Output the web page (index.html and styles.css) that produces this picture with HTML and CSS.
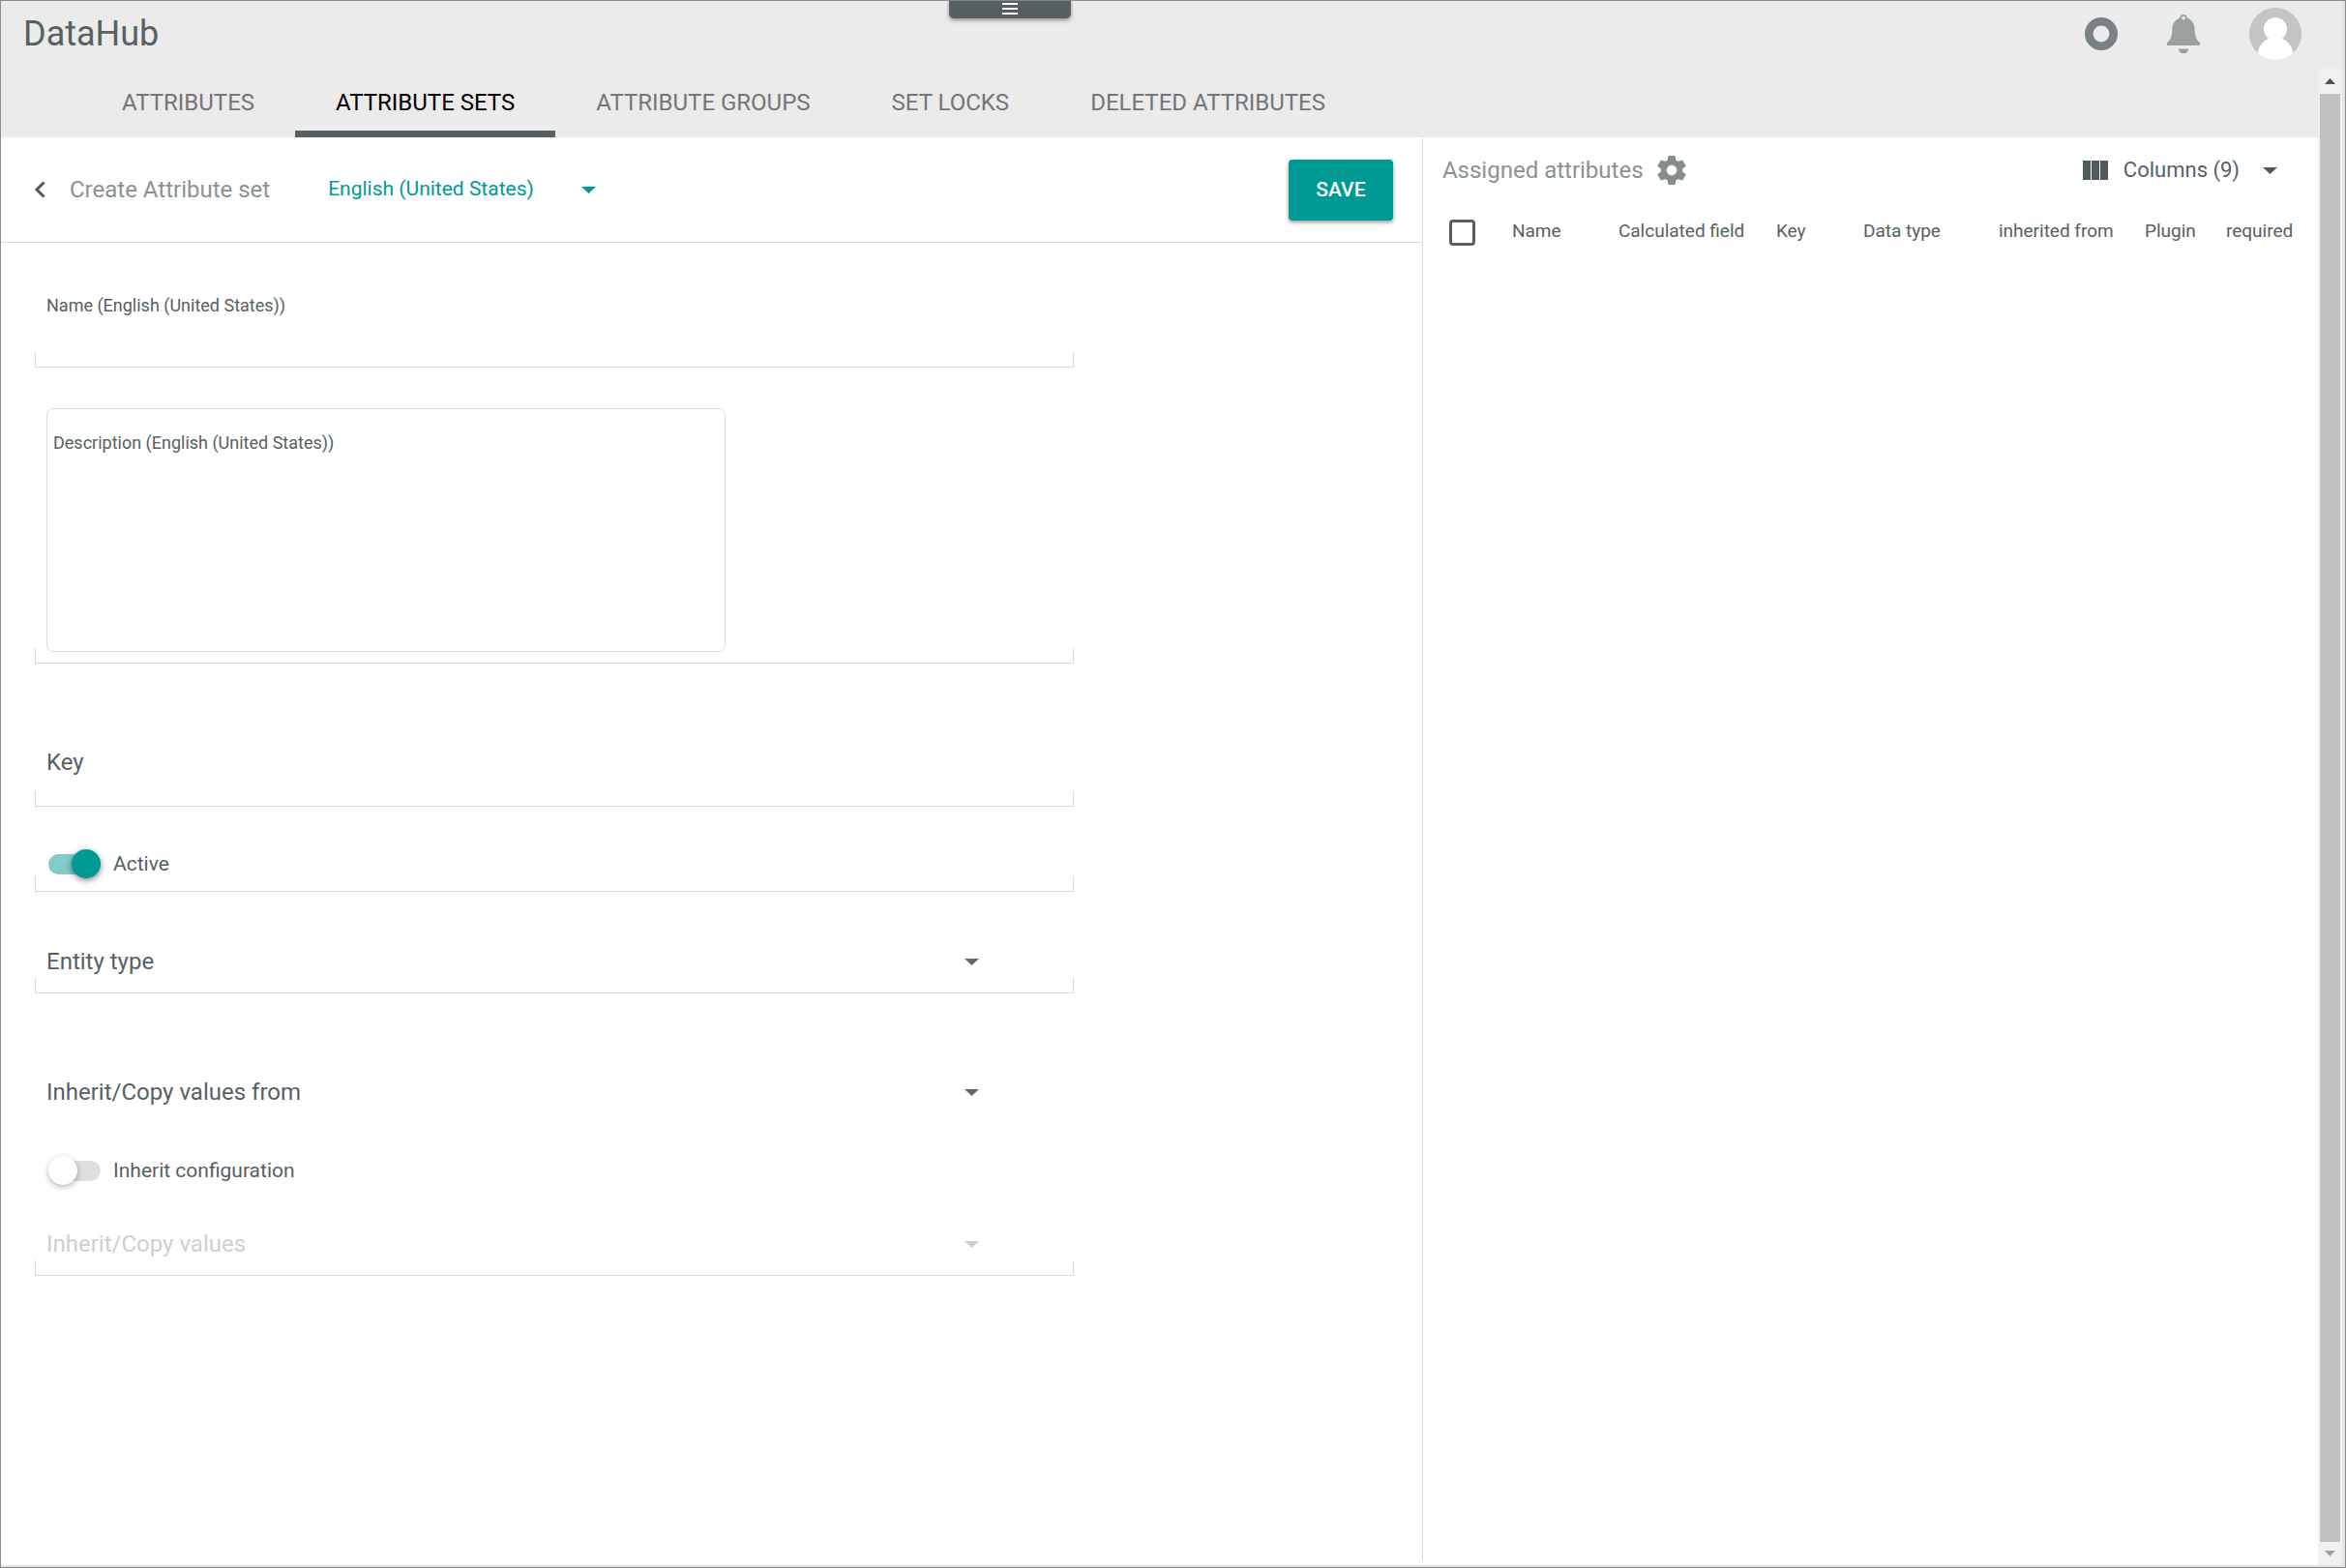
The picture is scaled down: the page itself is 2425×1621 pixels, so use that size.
FILE: index.html
```html
<!DOCTYPE html>
<html lang="en">
<head>
  <meta charset="utf-8">
  <meta name="viewport" content="width=device-width, initial-scale=1">
  <title>DataHub – Create Attribute set</title>
  <link rel="stylesheet" href="styles.css">
</head>
<body>
  <div class="app">
    <header class="topbar">
      <h1 class="brand">DataHub</h1>
      <button class="menu-tab" type="button" aria-label="Open menu">
        <svg width="16" height="12" viewBox="0 0 16 12" fill="#fff"><path d="M0 0h16v2H0zM0 5h16v2H0zM0 10h16v2H0z"/></svg>
      </button>
      <div class="topbar-actions">
        <button class="icon-button" type="button" aria-label="Status">
          <svg width="34" height="34" viewBox="0 0 34 34"><circle cx="17" cy="17" r="12.7" fill="none" stroke="#788183" stroke-width="8.6"/></svg>
        </button>
        <button class="icon-button" type="button" aria-label="Notifications">
          <svg width="34" height="41" viewBox="0 0 34 41" fill="#9a9f9f"><path fill-rule="evenodd" d="M17 0c2.200 0 3.800 1.500 3.800 3.600 4.500 1.600 7.400 5.600 7.700 10.900.3 7.500 1.500 12 5.500 14.600V32H0v-2.900c4-2.600 5.200-7.100 5.500-14.600.3-5.300 3.200-9.300 7.700-10.900C13.200 1.500 14.800 0 17 0zm0 1.700a1.900 1.900 0 1 0 0 3.800 1.900 1.900 0 0 0 0-3.800z"/><path d="M12 35.500h10c0 3-2 4.700-5 4.700s-5-1.700-5-4.700z"/></svg>
        </button>
        <button class="icon-button" type="button" aria-label="Account">
          <svg width="54" height="54" viewBox="0 0 54 54"><defs><clipPath id="avatar-clip"><circle cx="27" cy="27" r="27"/></clipPath></defs><g clip-path="url(#avatar-clip)"><path fill="#c4c4c4" d="M0 0h54v54H0z"/><circle cx="27" cy="22" r="12" fill="#fff"/><path fill="#fff" d="M20 32h14c6 2.500 9.500 7 11.500 14V54h-37v-8C10.500 39 14 34.500 20 32z"/></g></svg>
        </button>
      </div>
    </header>

    <div class="viewport">
      <div class="content">
        <nav class="tabs" aria-label="Sections">
          <a class="tab" href="#attributes">ATTRIBUTES</a>
          <a class="tab tab-active" href="#sets" aria-current="page">ATTRIBUTE SETS</a>
          <a class="tab" href="#groups">ATTRIBUTE GROUPS</a>
          <a class="tab" href="#locks">SET LOCKS</a>
          <a class="tab" href="#deleted">DELETED ATTRIBUTES</a>
        </nav>

        <main class="panels">
          <form class="editor">
            <div class="editor-head">
              <button class="back" type="button" aria-label="Back">
                <svg width="12" height="18" viewBox="0 0 12 18" fill="none" stroke="#4f5b5d" stroke-width="3"><path d="M10.500 1.500L3 9l7.500 7.500"/></svg>
              </button>
              <h2 class="title">Create Attribute set</h2>
              <div class="language">
                <select class="language-select" aria-label="Language">
                  <option>English (United States)</option>
                </select>
                <svg class="caret" width="15" height="7" viewBox="0 0 15 7"><path fill="#009a95" d="M0 0h15L7.500 7z"/></svg>
              </div>
              <button class="save" type="submit">SAVE</button>
            </div>

            <div class="fields">
              <div class="field field-name">
                <label class="small-label" for="name">Name (English (United States))</label>
                <input class="control" id="name" type="text">
              </div>

              <div class="field field-description">
                <div class="textbox">
                  <label class="small-label" for="description">Description (English (United States))</label>
                  <textarea class="control textarea" id="description"></textarea>
                </div>
              </div>

              <div class="field field-key">
                <div class="stack">
                  <label class="label" for="key">Key</label>
                  <input class="control" id="key" type="text">
                </div>
              </div>

              <div class="field field-active">
                <div class="switch-row">
                  <input class="switch" id="active" type="checkbox" checked>
                  <label class="switch-label" for="active">Active</label>
                </div>
              </div>

              <div class="field field-entity">
                <div class="stack">
                  <label class="label" for="entity">Entity type</label>
                  <select class="control" id="entity"><option></option></select>
                  <svg class="caret" width="15" height="7" viewBox="0 0 15 7"><path fill="#5d6a6b" d="M0 0h15L7.500 7z"/></svg>
                </div>
              </div>

              <div class="field field-inherit">
                <div class="stack">
                  <label class="label" for="inherit-from">Inherit/Copy values from</label>
                  <select class="control" id="inherit-from"><option></option></select>
                  <svg class="caret" width="15" height="7" viewBox="0 0 15 7"><path fill="#5d6a6b" d="M0 0h15L7.500 7z"/></svg>
                </div>
                <div class="switch-row">
                  <input class="switch" id="inherit-config" type="checkbox">
                  <label class="switch-label" for="inherit-config">Inherit configuration</label>
                </div>
                <div class="stack">
                  <label class="label label-disabled" for="inherit-values">Inherit/Copy values</label>
                  <select class="control" id="inherit-values" disabled><option></option></select>
                  <svg class="caret" width="15" height="7" viewBox="0 0 15 7"><path fill="#cacecf" d="M0 0h15L7.500 7z"/></svg>
                </div>
              </div>
            </div>
          </form>

          <section class="assigned">
            <div class="assigned-head">
              <h2 class="title">Assigned attributes</h2>
              <button class="icon-button" type="button" aria-label="Settings">
                <svg width="30" height="30" viewBox="2 2 20 20" fill="#848c8e"><path d="M19.430 12.980c.04-.32.07-.64.07-.98s-.03-.66-.07-.98l2.110-1.650c.19-.15.24-.42.12-.64l-2-3.460c-.12-.22-.39-.3-.61-.22l-2.490 1c-.52-.4-1.080-.73-1.690-.98l-.38-2.650C14.460 2.180 14.250 2 14 2h-4c-.25 0-.46.18-.49.42l-.38 2.650c-.61.25-1.170.59-1.690.98l-2.490-1c-.23-.09-.49 0-.61.22l-2 3.460c-.13.22-.07.49.12.64l2.110 1.650c-.04.32-.07.65-.07.98s.03.66.07.98l-2.110 1.650c-.19.15-.24.42-.12.64l2 3.460c.12.22.39.3.61.22l2.490-1c.52.4 1.080.73 1.690.98l.38 2.650c.03.24.24.42.49.42h4c.25 0 .46-.18.49-.42l.38-2.650c.61-.25 1.170-.59 1.690-.98l2.490 1c.23.09.49 0 .61-.22l2-3.460c.12-.22.07-.49-.12-.64l-2.110-1.650zM12 15.500c-1.930 0-3.500-1.570-3.500-3.500s1.570-3.500 3.500-3.500 3.500 1.570 3.500 3.500-1.570 3.500-3.500 3.500z"/></svg>
              </button>
              <button class="columns" type="button">
                <svg width="26" height="20" viewBox="0 0 26 20" fill="#4f5b5d"><path d="M0 0h8v20H0zM9 0h8v20H9zM18 0h8v20h-8z"/></svg>
                <span class="columns-text">Columns (9)</span>
                <svg width="15" height="7" viewBox="0 0 15 7"><path fill="#4f5b5d" d="M0 0h15L7.500 7z"/></svg>
              </button>
            </div>
            <table class="table">
              <colgroup>
                <col class="col-check"><col class="col-name"><col class="col-calc"><col class="col-key"><col class="col-type"><col class="col-from"><col class="col-plugin"><col>
              </colgroup>
              <thead>
                <tr>
                  <th class="check-cell"><input class="check" type="checkbox" aria-label="Select all"></th>
                  <th>Name</th>
                  <th>Calculated field</th>
                  <th>Key</th>
                  <th>Data type</th>
                  <th>inherited from</th>
                  <th>Plugin</th>
                  <th>required</th>
                </tr>
              </thead>
            </table>
          </section>
        </main>
      </div>

      <div class="scrollbar" aria-hidden="true">
        <svg class="scroll-arrow" width="25" height="26" viewBox="0 0 25 26"><path fill="#505050" d="M7 16l5.500-6 5.500 6z"/></svg>
        <div class="thumb"></div>
        <svg class="scroll-arrow" width="25" height="24" viewBox="0 0 25 24"><path fill="#a0a0a0" d="M7 9l5.500 6L18 9z"/></svg>
      </div>
    </div>
  </div>
</body>
</html>
```
FILE: styles.css
```css
*,
*::before {
  box-sizing: border-box;
}

body {
  margin: 0;
  font-family: Roboto, "Liberation Sans", sans-serif;
  color: #566163;
  background: #fff;
}

h1,
h2 {
  margin: 0;
  font-weight: 400;
}

button,
input,
select,
textarea {
  margin: 0;
  padding: 0;
  border: 0;
  background: none;
  color: inherit;
  font: inherit;
}

svg {
  display: block;
}

.app {
  display: flex;
  flex-direction: column;
  min-height: 100vh;
  padding: 0 3px 2px 0;
  border: 1px solid #8c8c8c;
  background: #e3e3e9;
}

/* Top bar */

.topbar {
  position: relative;
  display: flex;
  align-items: center;
  justify-content: space-between;
  height: 70px;
  padding: 0 42px 2px 23px;
  background: #ebebeb;
}

.brand {
  font-size: 36px;
  line-height: 40px;
}

.menu-tab {
  position: absolute;
  top: 0;
  left: 40.5%;
  display: flex;
  justify-content: center;
  width: 126px;
  height: 18px;
  padding-top: 2px;
  border-radius: 0 0 5px 5px;
  background: #566062;
  box-shadow: 0 2px 4px rgba(0, 0, 0, 0.4);
}

.topbar-actions {
  display: flex;
  align-items: center;
  gap: 51px;
}

/* Scrolling region */

.viewport {
  display: flex;
  flex: 1;
}

.content {
  display: flex;
  flex: 1;
  flex-direction: column;
  min-width: 0;
  background: #fff;
}

.scrollbar {
  display: flex;
  flex-direction: column;
  width: 25px;
  background: #f1f1f1;
}

.thumb {
  flex: 1;
  margin: 0 2px;
  background: #c1c1c1;
}

/* Tabs */

.tabs {
  display: flex;
  padding-left: 83px;
  background: #ebebeb;
}

.tab {
  padding: 0 42px;
  font-size: 24px;
  line-height: 71px;
  color: #757575;
  text-decoration: none;
}

.tab-active {
  color: #000;
  box-shadow: inset 0 -7px #566062;
}

/* Editor panel */

.panels {
  display: grid;
  flex: 1;
  grid-template-columns: minmax(0, 46fr) minmax(0, 29fr);
}

.editor-head {
  display: flex;
  align-items: center;
  height: 109px;
  padding: 0 30px 0 34px;
  border-bottom: 1px solid #d9dbdb;
}

.title {
  font-size: 24px;
  line-height: 36px;
  color: #8b9293;
}

.back {
  margin-right: 25px;
}

.language {
  display: grid;
  align-items: center;
  margin-left: 60px;
  color: #009a95;
}

.language > * {
  grid-area: 1 / 1;
}

.language-select {
  width: 277px;
  height: 36px;
  padding-bottom: 2px;
  font-size: 21px;
  appearance: none;
}

.caret {
  justify-self: end;
  pointer-events: none;
}

.save {
  width: 108px;
  height: 63px;
  margin-left: auto;
  border-radius: 4px;
  background: #009a95;
  box-shadow: 0 2px 4px rgba(0, 0, 0, 0.4);
  color: #fff;
  font-size: 21px;
  font-weight: 500;
}

/* Fields: a bottom rule with a short tick rising at each end */

.fields {
  padding: 0 2px 0 35px;
}

.field {
  width: 75%;
  padding: 0 12px;
  border-bottom: 1px solid #d9dbdb;
  background:
    linear-gradient(#d9dbdb, #d9dbdb) left bottom / 1px 15px no-repeat,
    linear-gradient(#d9dbdb, #d9dbdb) right bottom / 1px 15px no-repeat;
}

.field-name {
  padding-top: 53px;
  padding-bottom: 15px;
}

.field-description {
  padding-top: 42px;
  padding-bottom: 11px;
}

.field-key {
  padding-top: 84px;
  padding-bottom: 27px;
}

.field-active {
  padding-top: 44px;
  padding-bottom: 13px;
}

.field-entity {
  padding-top: 54px;
  padding-bottom: 14px;
}

.field-inherit {
  padding-top: 84px;
  padding-bottom: 14px;
}

.field-inherit .switch-row {
  margin: 48px 0 43px;
}

.small-label {
  display: block;
  font-size: 18px;
  line-height: 24px;
}

.label {
  font-size: 24px;
  line-height: 36px;
}

.label-disabled {
  color: #cdd0d1;
}

.control {
  display: block;
  width: 100%;
  height: 36px;
  font-size: 24px;
  appearance: none;
}

.textbox {
  max-width: 702px;
  padding: 23px 6px 0;
  border: 1px solid #d9dbdb;
  border-radius: 7px;
}

.textarea {
  height: 203px;
  font-size: 18px;
  resize: none;
}

.stack {
  display: grid;
  align-items: center;
}

.stack > * {
  grid-area: 1 / 1;
}

.stack .caret {
  margin-right: 86px;
}

.switch-row {
  display: flex;
  align-items: center;
  gap: 13px;
  height: 30px;
  padding-left: 2px;
}

.switch {
  display: grid;
  grid-template-rows: 21px;
  align-items: center;
  width: 54px;
  height: 21px;
  border-radius: 11px;
  background: #dcdedf;
  appearance: none;
}

.switch::before {
  content: "";
  width: 30px;
  height: 30px;
  border-radius: 50%;
  background: #fff;
  box-shadow: 0 2px 6px rgba(0, 0, 0, 0.3);
}

.switch:checked {
  justify-items: end;
  background: #80cdca;
}

.switch:checked::before {
  background: #009a95;
  box-shadow: 0 2px 6px rgba(0, 0, 0, 0.5);
}

.switch-label {
  font-size: 21px;
  line-height: 30px;
}

/* Assigned attributes */

.assigned {
  margin: 1px 0 5px;
  border-left: 1px solid #d9dbdb;
}

.assigned-head {
  display: flex;
  align-items: center;
  padding: 15px 42px 0 20px;
}

.assigned-head .icon-button {
  margin-left: 14px;
}

.columns {
  display: flex;
  align-items: center;
  margin-left: auto;
}

.columns-text {
  margin: 0 24px 0 16px;
  font-size: 22px;
  line-height: 36px;
}

.table {
  width: 100%;
  margin-top: 24px;
  border-collapse: collapse;
  table-layout: fixed;
}

.table th {
  height: 45px;
  padding: 0 0 5px;
  font-size: 19px;
  font-weight: 400;
  text-align: left;
  white-space: nowrap;
}

.table .check-cell {
  padding: 0;
}

.col-check {
  width: 92px;
}

.col-name {
  width: 110px;
}

.col-calc {
  width: 163px;
}

.col-key {
  width: 90px;
}

.col-type {
  width: 140px;
}

.col-from {
  width: 151px;
}

.col-plugin {
  width: 84px;
}

.check {
  display: block;
  width: 27px;
  height: 27px;
  margin-left: 27px;
  border: 3px solid #566062;
  border-radius: 4px;
  appearance: none;
}
```
